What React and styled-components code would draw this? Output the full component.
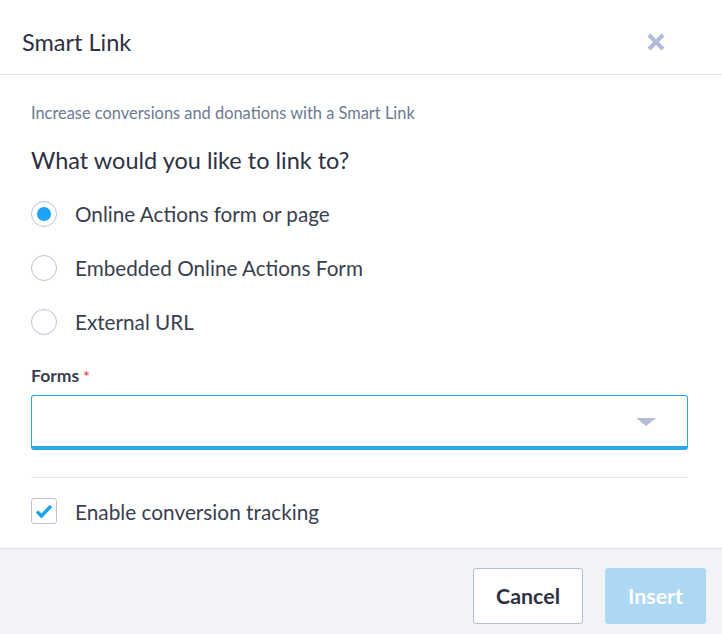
import React, { useState } from "react";
import styled, { createGlobalStyle } from "styled-components";

const GlobalStyle = createGlobalStyle`
  body {
    margin: 0;
    background: #ffffff;
    font-family: Lato, "Noto Sans", sans-serif;
    color: #2d3142;
  }
`;

const Dialog = styled.div`
  width: 722px;
  height: 634px;
  display: flex;
  flex-direction: column;
  background: #ffffff;
`;

const Header = styled.header`
  height: 74px;
  box-sizing: content-box;
  display: flex;
  align-items: center;
  justify-content: space-between;
  padding: 0 55px 0 22px;
  border-bottom: 1px solid #dfe5eb;
`;

const Title = styled.h1`
  margin: 10px 0 0;
  font-size: 23.5px;
  font-weight: 400;
  color: #2d3142;
`;

const CloseButton = styled.button`
  border: 0;
  background: none;
  padding: 0;
  margin-top: 10px;
  width: 22px;
  height: 22px;
  display: flex;
  align-items: center;
  justify-content: center;
  cursor: pointer;
`;

const Body = styled.div`
  flex: 1;
  padding: 28px 34px 0 31px;
  display: flex;
  flex-direction: column;
`;

const Subtitle = styled.p`
  margin: 0;
  font-size: 16.4px;
  line-height: 20px;
  color: #6c7a93;
`;

const Question = styled.h2`
  margin: 23px 0 13px;
  font-size: 23.5px;
  line-height: 28px;
  font-weight: 400;
  color: #2d3142;
`;

const OptionRow = styled.label`
  height: 54px;
  display: flex;
  align-items: center;
  gap: 18px;
  font-size: 20.7px;
  color: #3a3f50;
  cursor: pointer;
`;

const RadioCircle = styled.span`
  flex: none;
  width: 26px;
  height: 26px;
  box-sizing: border-box;
  border-radius: 50%;
  border: 1px solid #b9c3d8;
  display: flex;
  align-items: center;
  justify-content: center;

  &::after {
    content: "";
    width: 14px;
    height: 14px;
    border-radius: 50%;
    background: ${props => (props.$checked ? "#1ba4f4" : "transparent")};
  }
`;

const FieldLabel = styled.div`
  margin-top: 17px;
  font-size: 17.6px;
  line-height: 20px;
  font-weight: 700;
  color: #3a3f50;

  span {
    color: #e4565b;
    font-size: 15px;
    vertical-align: top;
    margin-left: 4px;
  }
`;

const SelectBox = styled.div`
  margin-top: 9px;
  height: 55px;
  box-sizing: border-box;
  border: 1px solid #2aa8e8;
  border-bottom-width: 4px;
  border-radius: 3px;
  display: flex;
  align-items: center;
  justify-content: flex-end;
  padding-right: 31px;
`;

const Caret = styled.span`
  width: 0;
  height: 0;
  margin-top: 2px;
  border-left: 10px solid transparent;
  border-right: 10px solid transparent;
  border-top: 8px solid #b3bdd6;
`;

const Divider = styled.hr`
  margin: 27px 0 20px;
  border: 0;
  border-top: 1px solid #e1e6ea;
`;

const CheckRow = styled.label`
  display: flex;
  align-items: center;
  gap: 18px;
  font-size: 20.8px;
  color: #3a3f50;
  cursor: pointer;
`;

const CheckBox = styled.span`
  flex: none;
  width: 26px;
  height: 26px;
  box-sizing: border-box;
  border: 1px solid #b9c3d8;
  border-radius: 3px;
  display: flex;
  align-items: center;
  justify-content: center;
`;

const Footer = styled.footer`
  height: 86px;
  box-sizing: border-box;
  border-top: 1px solid #d8e1e5;
  background: #f2f3f7;
  display: flex;
  justify-content: flex-end;
  align-items: flex-start;
  gap: 22px;
  padding: 19px 16px 0 0;
`;

const Button = styled.button`
  height: 56px;
  box-sizing: border-box;
  border-radius: 3px;
  font-family: Lato, "Noto Sans", sans-serif;
  font-size: 21.4px;
  font-weight: 700;
  padding: 0 22px;
  border: 1px solid ${props => (props.$primary ? "#acd8f3" : "#b5bfd4")};
  background: ${props => (props.$primary ? "#acd8f3" : "#ffffff")};
  color: ${props => (props.$primary ? "#ffffff" : "#2d3142")};
  cursor: pointer;
`;

const options = [
  "Online Actions form or page",
  "Embedded Online Actions Form",
  "External URL",
];

const App = () => {
  const [selected, setSelected] = useState(0);

  return (
    <>
      <GlobalStyle />
      <Dialog>
        <Header>
          <Title>Smart Link</Title>
          <CloseButton aria-label="Close">
            <svg width="20" height="20" viewBox="0 0 20 20">
              <path
                d="M3 3 L17 17 M17 3 L3 17"
                stroke="#b1bcd9"
                strokeWidth="4.2"
                strokeLinecap="butt"
              />
            </svg>
          </CloseButton>
        </Header>
        <Body>
          <Subtitle>Increase conversions and donations with a Smart Link</Subtitle>
          <Question>What would you like to link to?</Question>
          {options.map((opt, i) => (
            <OptionRow key={opt} onClick={() => setSelected(i)}>
              <RadioCircle $checked={selected === i} />
              {opt}
            </OptionRow>
          ))}
          <FieldLabel>
            Forms<span>*</span>
          </FieldLabel>
          <SelectBox>
            <Caret />
          </SelectBox>
          <Divider />
          <CheckRow>
            <CheckBox>
              <svg width="18" height="16" viewBox="0 0 18 16">
                <path
                  d="M2 8.5 L6.5 13 L16 3"
                  fill="none"
                  stroke="#1ba4f4"
                  strokeWidth="3.4"
                />
              </svg>
            </CheckBox>
            Enable conversion tracking
          </CheckRow>
        </Body>
        <Footer>
          <Button>Cancel</Button>
          <Button $primary>Insert</Button>
        </Footer>
      </Dialog>
    </>
  );
};

export default App;
